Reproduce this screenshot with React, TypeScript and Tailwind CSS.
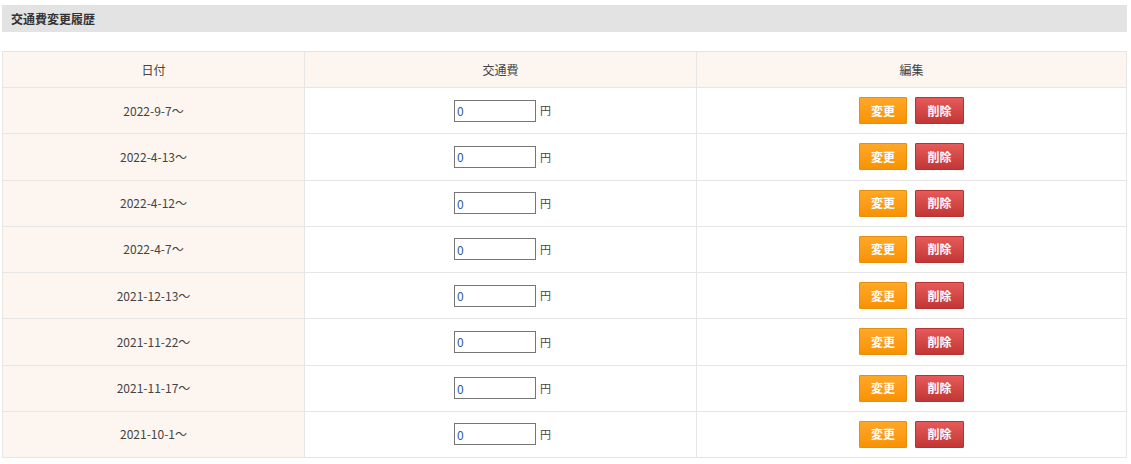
import React from 'react';

const rows = [
  '2022-9-7～',
  '2022-4-13～',
  '2022-4-12～',
  '2022-4-7～',
  '2021-12-13～',
  '2021-11-22～',
  '2021-11-17～',
  '2021-10-1～',
];

const font = { fontFamily: '"Noto Sans CJK JP", "Noto Sans", sans-serif' };

export default function App() {
  return (
    <div className="bg-white w-[1131px] h-[464px] pt-[5px] pl-[2px] pr-[4px] text-[#333]" style={font}>
      {/* Section title */}
      <div className="h-[27px] bg-[#e3e3e3] flex items-center pl-[9px] text-[12px] font-bold text-[#333]">
        交通費変更履歴
      </div>

      {/* History table */}
      <table className="mt-[19px] w-full border-collapse text-[12px] text-[#444] table-fixed">
        <colgroup>
          <col className="w-[302px]" />
          <col className="w-[392px]" />
          <col />
        </colgroup>
        <thead>
          <tr className="h-[36px] bg-[#fdf5ef]">
            <th className="border border-[#e6e6e6] font-normal">日付</th>
            <th className="border border-[#e6e6e6] font-normal">交通費</th>
            <th className="border border-[#e6e6e6] font-normal">編集</th>
          </tr>
        </thead>
        <tbody>
          {rows.map((date) => (
            <tr key={date} className="h-[46.25px]">
              <td className="border border-[#e6e6e6] bg-[#fdf5ef] text-center">{date}</td>
              <td className="border border-[#e6e6e6] text-center">
                <div className="flex items-center justify-center gap-[4px] pl-[4px]">
                  <input
                    type="text"
                    defaultValue="0"
                    className="w-[82px] h-[22px] border border-[#767676] px-[2px] text-[12px] text-[#2c5aa0] outline-none"
                    style={font}
                  />
                  <span className="text-[11px]">円</span>
                </div>
              </td>
              <td className="border border-[#e6e6e6] text-center">
                <div className="flex items-center justify-center gap-[8px]">
                  <button className="w-[48px] h-[27px] rounded-[1px] border border-[#e3900f] bg-gradient-to-b from-[#ffa726] to-[#f99200] text-white text-[12px] font-bold">
                    変更
                  </button>
                  <button className="w-[49px] h-[27px] rounded-[1px] border border-[#b83232] bg-gradient-to-b from-[#e65a5a] to-[#c23636] text-white text-[12px] font-bold">
                    削除
                  </button>
                </div>
              </td>
            </tr>
          ))}
        </tbody>
      </table>
    </div>
  );
}
